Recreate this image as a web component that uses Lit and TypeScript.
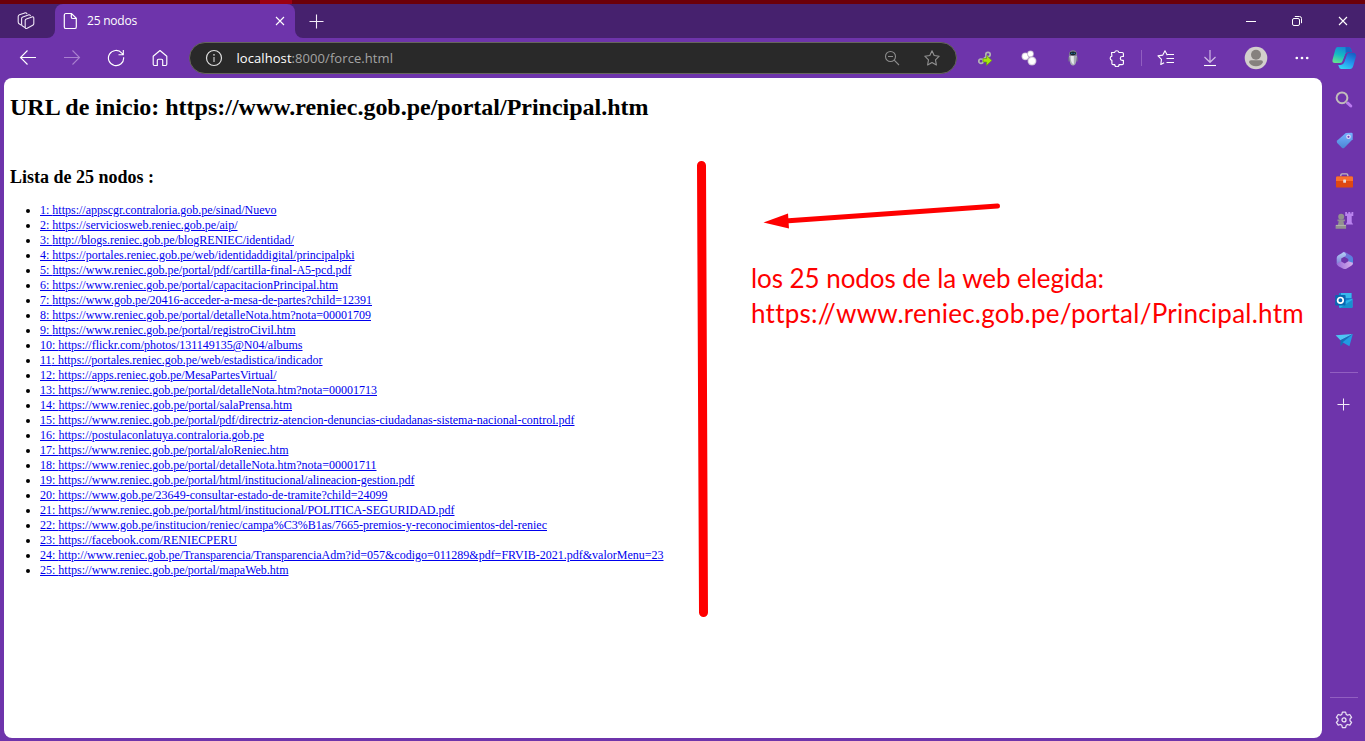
import { LitElement, html, css, svg } from "lit";
import { customElement } from "lit/decorators.js";

type Node = [label: string, width: number];

const NODES: Node[] = [
  ["https://appscgr.contraloria.gob.pe/sinad/Nuevo", 236.5],
  ["https://serviciosweb.reniec.gob.pe/aip/", 197.5],
  ["http://blogs.reniec.gob.pe/blogRENIEC/identidad/", 254],
  ["https://portales.reniec.gob.pe/web/identidaddigital/principalpki", 314.5],
  ["https://www.reniec.gob.pe/portal/pdf/cartilla-final-A5-pcd.pdf", 311.5],
  ["https://www.reniec.gob.pe/portal/capacitacionPrincipal.htm", 298],
  ["https://www.gob.pe/20416-acceder-a-mesa-de-partes?child=12391", 332],
  ["https://www.reniec.gob.pe/portal/detalleNota.htm?nota=00001709", 331],
  ["https://www.reniec.gob.pe/portal/registroCivil.htm", 255.5],
  ["https://flickr.com/photos/131149135@N04/albums", 262.5],
  ["https://portales.reniec.gob.pe/web/estadistica/indicador", 282.5],
  ["https://apps.reniec.gob.pe/MesaPartesVirtual/", 236.5],
  ["https://www.reniec.gob.pe/portal/detalleNota.htm?nota=00001713", 337],
  ["https://www.reniec.gob.pe/portal/salaPrensa.htm", 252],
  ["https://www.reniec.gob.pe/portal/pdf/directriz-atencion-denuncias-ciudadanas-sistema-nacional-control.pdf", 534.5],
  ["https://postulaconlatuya.contraloria.gob.pe", 224],
  ["https://www.reniec.gob.pe/portal/aloReniec.htm", 248.5],
  ["https://www.reniec.gob.pe/portal/detalleNota.htm?nota=00001711", 336.5],
  ["https://www.reniec.gob.pe/portal/html/institucional/alineacion-gestion.pdf", 374.5],
  ["https://www.gob.pe/23649-consultar-estado-de-tramite?child=24099", 347.5],
  ["https://www.reniec.gob.pe/portal/html/institucional/POLITICA-SEGURIDAD.pdf", 414.5],
  ["https://www.gob.pe/institucion/reniec/campa%C3%B1as/7665-premios-y-reconocimientos-del-reniec", 507],
  ["https://facebook.com/RENIECPERU", 197],
  ["http://www.reniec.gob.pe/Transparencia/TransparenciaAdm?id=057&codigo=011289&pdf=FRVIB-2021.pdf&valorMenu=23", 623.5],
  ["https://www.reniec.gob.pe/portal/mapaWeb.htm", 248.5],
];

const glyph = (size: number, body: unknown) =>
  html`<svg width=${size} height=${size} viewBox="0 0 ${size} ${size}">${body}</svg>`;

const ICONS = {
  workspaces: glyph(20, svg`<g fill="none" stroke="#eee6f5" stroke-width="1.1" stroke-linejoin="round">
    <path d="M9.2 9.6Q9.2 8.3 10.4 7.9L16 5.9Q17.8 5.4 17.8 7.1V12.4Q17.8 13.7 16.7 14.3L11.2 17.3Q9.2 18.1 9.2 16.2Z"/>
    <path d="M9 16.4 7.2 15.6Q5.6 15 5.6 13.3V7.6Q5.6 6.3 6.8 5.9L12.4 3.9Q14.2 3.4 14.5 5.2"/>
    <path d="M5.6 14.2 3.8 13.3Q2.2 12.6 2.2 11V5.6Q2.2 4.3 3.4 3.8L8.8 1.9Q10.6 1.400 11 3.2"/></g>`),
  page: glyph(18, svg`<path d="M4.2 1.5h6.3l4.8 4.8v8.6q0 1.6-1.6 1.6H4.9q-1.6 0-1.6-1.6V3.1q0-1.6 1.6-1.6M10.3 1.7v3.2q0 1.6 1.6 1.6h3.2" fill="none" stroke="#fff" stroke-width="1.2"/>`),
  close: glyph(10, svg`<path d="M1 1l8 8M9 1l-8 8" stroke="#fff" stroke-width="1.1"/>`),
  plus: glyph(16, svg`<path d="M8.5 1.5v14M1.5 8.5h14" stroke="#f4edf9" stroke-width="1.1"/>`),
  plusSmall: glyph(16, svg`<path d="M7.500 1.500v12M1.500 7.500h12" stroke="#f4edf9" stroke-width="1"/>`),
  min: glyph(12, svg`<path d="M1 6.5h10" stroke="#fff"/>`),
  restore: glyph(12, svg`<rect x="1.5" y="3.5" width="7" height="7" rx="1.5" fill="none" stroke="#fff"/><path d="M3.8 1.5h4.7q2 0 2 2v4.7" fill="none" stroke="#fff"/>`),
  back: glyph(18, svg`<path d="M17 8.500H1.500M8.500 1.500 1.500 8.500l7 7" fill="none" stroke="#fff" stroke-width="1.1"/>`),
  forward: glyph(18, svg`<path d="M1 8.500h15.500M9.500 1.500l7 7-7 7" fill="none" stroke="#a980cf" stroke-width="1.1"/>`),
  reload: glyph(18, svg`<path d="M16.6 8.3A7.6 7.6 0 1 1 14.8 4.1L16.3 5.6M16.3 1v4.7h-4.8" fill="none" stroke="#fff" stroke-width="1.15"/>`),
  home: glyph(18, svg`<path d="M2.2 7.3 9 1.5l6.8 5.8v8q0 1.2-1.2 1.2h-2.900v-5.100q0-1.200-1.200-1.200H7.500q-1.200 0-1.200 1.200v5.100H3.400q-1.200 0-1.200-1.200z" fill="none" stroke="#fff" stroke-width="1.15" stroke-linejoin="round"/>`),
  info: glyph(18, svg`<circle cx="9" cy="9" r="7.5" fill="none" stroke="#dedede" stroke-width="1.2"/><path d="M9 8v5" stroke="#bbb" stroke-width="1.3"/><circle cx="9" cy="5.8" r=".9" fill="#ccc"/>`),
  zoomOut: glyph(16, svg`<g fill="none" stroke="#8c8c8c" stroke-width="1.1"><circle cx="6.5" cy="6.5" r="5"/><path d="M4 6.5h5M10.2 10.2l4.8 4.8"/></g>`),
  star: glyph(18, svg`<path d="M9 1.8l2.2 4.7 5 .7-3.7 3.6.9 5.2L9 13.5 4.6 16l.9-5.2-3.7-3.6 5-.7z" fill="none" stroke="#929292" stroke-width="1.1" stroke-linejoin="round"/>`),
  chain: glyph(16, svg`<g fill="none" stroke="#b2b3b4" stroke-width="1.700"><circle cx="4" cy="11.200" r="2.200"/><path d="M5.500 9.800 10 5.800"/><circle cx="11" cy="4.500" r="2.200"/></g><path d="M6 8.600h3.600V5.400l5.200 5-5.200 5v-3.400H6z" fill="#a5e80c" stroke="#6a9c10" stroke-width=".7"/>`),
  dots: html`<svg width="18" height="18" viewBox="0 0 18 18"><defs><radialGradient id="ball"><stop offset=".6" stop-color="#fff"/><stop offset="1" stop-color="#bba9cb"/></radialGradient></defs><g fill="url(#ball)"><circle cx="5.4" cy="7.3" r="3.900"/><circle cx="10.500" cy="4.900" r="3.300"/><circle cx="12" cy="12" r="4.500"/></g></svg>`,
  robot: glyph(18, svg`<path d="M4.800 6.600h8.400l-.8 5.400Q11.500 16.500 9 16.500T5.600 12z" fill="#a8adb3"/><path d="M6.600 7h3.200v8.400q-2.500-1-3-5z" fill="#e6e8ec"/><path d="M4.900 5.700Q5.200 1.200 9 1.200t4.100 4.500q-1.200 1.200-4.100 1.200T4.900 5.700" fill="#7c8289"/><ellipse cx="9" cy="4.300" rx="3.100" ry="1.900" fill="#17202b"/><path d="M7 4.300h1.500M9.600 4.300h1.500" stroke="#237bb0"/><path d="M4.700 8v4.500M13.300 8v4.500" stroke="#727981" stroke-width=".8"/>`),
  puzzle: glyph(18, svg`<path d="M3.5 3.5h3.1a2.2 2.2 0 0 1 4.3 0h3.3q1.2 0 1.2 1.2v2.8h-1.2a1.9 1.9 0 0 0 0 3.8h1.2v3.1q0 1.2-1.2 1.2h-3.1a2.2 2.2 0 0 1-4.4 0H5.100q-1.200 0-1.200-1.200v-3a2.200 2.200 0 0 1 0-4.300z" fill="none" stroke="#fff" stroke-width="1.15" stroke-linejoin="round"/>`),
  favorites: glyph(18, svg`<path d="M10.3 6.2 8 1.8 5.8 6.1 1 6.9l3.5 3.4-.7 5.2 3.3-1.8M10 5.500H17M9.500 9.500H17M9.500 13.500H17" fill="none" stroke="#fff" stroke-width="1.1" stroke-linejoin="round"/>`),
  download: glyph(18, svg`<path d="M9 1v12M3.5 8l5.5 5.3L14.5 8" fill="none" stroke="#cfb8e4" stroke-width="1.2"/><path d="M3 16.5h12" stroke="#fff" stroke-width="1.1"/>`),
  avatar: glyph(24, svg`<circle cx="12" cy="12" r="11.3" fill="#d2cfcc"/><circle cx="12" cy="8.8" r="5" fill="#85817e"/><path d="M5 16.300q0-2 2-2h10q2 0 2 2-2 4-7 4t-7-4" fill="#85817e"/>`),
  more: glyph(16, svg`<g fill="#fff"><circle cx="2.8" cy="8" r="1.35"/><circle cx="8" cy="8" r="1.35"/><circle cx="13.2" cy="8" r="1.35"/></g>`),
  copilot: html`<svg width="26" height="26" viewBox="0 0 26 26"><defs>
    <linearGradient id="cpA" x1=".6" y1="0" x2=".2" y2="1"><stop stop-color="#1685d5"/><stop offset=".5" stop-color="#14b9c4"/><stop offset="1" stop-color="#65e58e"/></linearGradient>
    <linearGradient id="cpB" x1=".7" y1="0" x2=".2" y2="1"><stop stop-color="#1761c6"/><stop offset=".5" stop-color="#2495ee"/><stop offset="1" stop-color="#35d8f4"/></linearGradient></defs>
    <path d="M6.500 2h11q2 0 2.800 2.700l.7 2.300h-4q-2 0-2.600 2l-2.400 7q-.6 2-3.200 2H4Q.8 18 1.600 14.500L4.200 5Q4.800 2 6.500 2z" fill="url(#cpA)"/>
    <path d="M18 7.700h4.700q3 .8 2.200 4.100l-2.600 9q-1 3.200-3.300 3.200h-8.500q-2.200 0-2.700-2.500L7.200 20h2.600q2.600 0 3.400-2.700l2.600-7.600q.6-2 2.200-2z" fill="url(#cpB)"/>
    <path d="M14.500 2h3q2 0 2.800 2.700l.7 2.300h-4q-1.700 0-2.300 1.400z" fill="#1765c7"/>
    <path d="M14.300 9.500 16.600 7.700 12.800 17.600 10.800 18z" fill="#6e34ab"/></svg>`,
  search: glyph(20, svg`<circle cx="8" cy="7.8" r="5.4" fill="none" stroke="#c2bdbb" stroke-width="2"/><path d="M11.800 11.800l2 2" stroke="#a9a2ad" stroke-width="2"/><path d="M13.800 13.200l3 2.800" stroke="#bb7bf0" stroke-width="3" stroke-linecap="round"/>`),
  tag: html`<svg width="20" height="20" viewBox="0 0 20 20"><defs><linearGradient id="tagG" x2="0" y2="1"><stop stop-color="#76b2ff"/><stop offset="1" stop-color="#4a86d4"/></linearGradient></defs><path d="M11.800 3l5.500-.3q1.400 0 1.400 1.300v5.300l-8.300 8.500q-1.300 1-2.500 0l-4.700-4.800q-1-1.200 0-2.400z" fill="url(#tagG)"/><circle cx="14.500" cy="6.800" r="2.300" fill="#e3dafa"/><circle cx="14.500" cy="6.800" r="1.100" fill="#7642b5"/></svg>`,
  toolbox: glyph(20, svg`<path d="M6.800 6.600V5.200q0-1.300 1.300-1.300h4.400q1.300 0 1.300 1.300v1.400" fill="none" stroke="#bfb6bc" stroke-width="1.4"/><rect x="2" y="6.400" width="17" height="11.200" rx="1.2" fill="#df4812"/><path d="M2 7.600q0-1.200 1.200-1.200h14.600q1.200 0 1.200 1.200v3.400H2z" fill="#fa702e"/><rect x="9.200" y="9.600" width="2.800" height="3.200" rx=".5" fill="#e9dddb"/>`),
  games: glyph(20, svg`<g fill="#b983ee"><path d="M11.2 2h1.8v1.4h1.300V2h2v1.400h1.200V2h1.800v4h-1.600v6.200l1.500 2.200h-7.600l1.400-2.200V6h-1.800z"/></g><g fill="#92918f"><circle cx="7.200" cy="6.800" r="3"/><path d="M3.500 9.500h7.400v1.700H9.500l.7 3.900h1.900v3.700H1.600v-3.700h2.200l1-3.900H3.500z"/></g><path d="M2 15.400h10" stroke="#b5b4b0"/>`),
  m365: html`<svg width="20" height="20" viewBox="0 0 20 20"><defs>
    <linearGradient id="msA" x2="1" y2="1"><stop stop-color="#8d63d8"/><stop offset="1" stop-color="#3f8fe0"/></linearGradient>
    <linearGradient id="msB" x2="0" y2="1"><stop stop-color="#b4d3f6"/><stop offset="1" stop-color="#7f7ad8"/></linearGradient>
    <linearGradient id="msC"><stop stop-color="#9a6ddb"/><stop offset="1" stop-color="#d7aeea"/></linearGradient></defs>
    <path d="M8.500 2.300q1.500-.9 3 0l5.800 3.500q1.700 1 1.700 3v6l-4.700-3V9L8 5.500z" fill="url(#msA)"/>
    <path d="M10 1.900 4.300 5.200Q2.700 6.200 2.700 8v6.300L7.200 12V8.600l4-2.400q1-.8.8-2.300z" fill="url(#msB)"/>
    <path d="M7.200 11.600 2.700 13.800q.3 1.500 1.800 2.400l4.800 2.500q1.500.7 3 0l5-2.900Q19 14.700 19 12.800l-4.700-1.600-3.500 2.300z" fill="url(#msC)"/></svg>`,
  outlook: glyph(20, svg`<path d="M5 3h12.500v14H5z" fill="#1681cd"/><path d="M7 3h10.500v5H7z" fill="#38b8ed"/><path d="M5 13l13.500-4.500v8.300q0 1.200-1.200 1.200H6.200Q5 18 5 16.800z" fill="#29b1eb"/><path d="M6 18l12.400-8.200V17q0 1-1 1z" fill="#178fce"/><rect x="1.200" y="5" width="10.400" height="10.600" rx="1" fill="#0867b2"/><circle cx="6.400" cy="10.300" r="2.800" fill="none" stroke="#fff" stroke-width="1.7"/>`),
  send: glyph(20, svg`<path d="M1.600 5.200 18.800 4 6.500 10.200z" fill="#4cc6f4"/><path d="M18.800 4 6.500 10.200v6.200l3-3.600z" fill="#1371b9"/><path d="M18.800 4l-3.400 12.200-6.800-4z" fill="#229be3"/>`),
  gear: glyph(20, svg`<path d="M8.400 2.200h3.200l.6 2.200 1.400.8 2.200-.7 1.800 2.800-1.600 1.700v1.700l1.600 1.700-1.800 2.800-2.200-.7-1.400.8-.6 2.400H8.400l-.6-2.400-1.400-.8-2.200.7-1.800-2.800L4 10.700V9L2.400 7.300l1.800-2.800 2.200.7 1.400-.8z" fill="none" stroke="#e9dff3" stroke-width="1.25" stroke-linejoin="round"/><circle cx="10" cy="9.900" r="2" fill="none" stroke="#f1eaf7" stroke-width="1.2"/>`),
};

@customElement("app-root")
export class AppRoot extends LitElement {
  static styles = css`
    :host { display: block; font-family: "Open Sans", sans-serif; }
    * { box-sizing: border-box; }
    svg { display: block; flex: none; }
    .window { position: relative; display: flex; flex-direction: column; height: 741px; background: #6e34ab; overflow: hidden; }
    .strip { height: 4px; flex: none; background: linear-gradient(90deg, #6c000a 0 260px, #9b0013 260px 292px, #6c000a 292px); }
    .tabs { height: 34px; flex: none; display: flex; background: #6e34ab; }
    .work { width: 55px; background: #46216e; border-bottom-right-radius: 8px; padding: 7px 0 0 16px; }
    .corner { width: 240px; background: #46216e; }
    .tab { height: 34px; display: flex; align-items: center; padding: 0 10px 0 6px; background: #6e34ab; border-radius: 8px 8px 0 0; color: #fff; font-size: 12px; }
    .tab-title { flex: 1; margin-left: 8px; padding-bottom: 1px; }
    .rest { flex: 1; display: flex; background: #46216e; border-bottom-left-radius: 8px; padding-left: 13px; align-items: center; }
    .controls { margin-left: auto; margin-right: -1px; display: flex; }
    .control { width: 46px; height: 34px; display: flex; align-items: center; justify-content: center; }
    .toolbar { height: 40px; flex: none; display: flex; align-items: center; padding-left: 6px; }
    .btn { width: 44px; display: flex; justify-content: center; }
    .w42 { width: 42px; }
    .w46 { width: 46px; }
    .w50 { width: 50px; }
    .sep { width: 1px; height: 16px; margin: 0 1px 0 2px; background: #915fc0; }
    .address { width: 768px; height: 32px; margin: 0 6.500px 0 6.500px; display: flex; align-items: center; padding: 0 15px; border: 1px solid #66655d; border-radius: 16px; background: #292929; color: #a4a4a4; font-size: 13px; }
    .url { flex: 1; margin-left: 14px; white-space: nowrap; }
    .host { color: #fff; }
    .star { margin-left: 23px; }
    .main { flex: 1; display: flex; min-height: 0; }
    .page { width: 1318px; height: 660px; margin-left: 4px; padding: 15px 6px 0; border-radius: 8px; background: #fff; color: #000; font-family: "Liberation Serif", serif; font-size: 12px; }
    h1 { margin: 0; font-size: 24px; line-height: 28px; }
    h2 { margin: 46px 0 0; font-size: 18px; line-height: 20px; }
    ul { margin: 16px 0 0; padding-left: 30px; }
    li { height: 15px; line-height: 15px; }
    a { color: #0000ee; text-decoration: underline; white-space: nowrap; }
    .side { width: 43px; display: flex; flex-direction: column; align-items: center; padding: 2px 0 1px 1px; }
    .side-btn { width: 40px; height: 40px; display: flex; align-items: center; justify-content: center; }
    .rule { width: 28px; height: 1px; background: #925fc1; margin: 12px 0; }
    .rule-end { margin: auto 0 2px; }
    .marks { position: absolute; left: 0; top: 0; pointer-events: none; }
    .note { position: absolute; left: 751px; top: 261px; color: #fe0000; font-family: Lato, "Open Sans", sans-serif; font-size: 26px; line-height: 35px; white-space: nowrap; }
    .line { display: block; width: max-content; }
  `;

  // Spreads each marked text over its intended width by adjusting the tracking.
  private async fit() {
    await document.fonts.ready;
    this.renderRoot.querySelectorAll<HTMLElement>("[data-w]").forEach((el) => {
      el.style.letterSpacing = "0px";
      const gap = Number(el.dataset.w) - el.getBoundingClientRect().width;
      el.style.letterSpacing = `${gap / el.textContent!.length}px`;
    });
  }

  firstUpdated() {
    this.fit();
  }

  render() {
    const btn = (icon: unknown, size = "") => html`<div class="btn ${size}">${icon}</div>`;
    const side = (icon: unknown) => html`<div class="side-btn">${icon}</div>`;
    return html`
      <div class="window">
        <div class="strip"></div>
        <div class="tabs">
          <div class="work">${ICONS.workspaces}</div>
          <div class="corner">
            <div class="tab">${ICONS.page}<span class="tab-title"><span data-w="50">25 nodos</span></span>${ICONS.close}</div>
          </div>
          <div class="rest">
            ${ICONS.plus}
            <div class="controls">
              <div class="control">${ICONS.min}</div>
              <div class="control">${ICONS.restore}</div>
              <div class="control">${ICONS.close}</div>
            </div>
          </div>
        </div>
        <div class="toolbar">
          ${btn(ICONS.back)}${btn(ICONS.forward)}${btn(ICONS.reload)}${btn(ICONS.home)}
          <div class="address">
            ${ICONS.info}
            <span class="url"><span data-w="156.5"><span class="host">localhost</span>:8000/force.html</span></span>
            ${ICONS.zoomOut}<span class="star">${ICONS.star}</span>
          </div>
          ${btn(ICONS.chain)}${btn(ICONS.dots)}${btn(ICONS.robot)}${btn(ICONS.puzzle)}
          <div class="sep"></div>
          ${btn(ICONS.favorites, "w46")}${btn(ICONS.download, "w42")}${btn(ICONS.avatar, "w50")}${btn(ICONS.more, "w42")}${btn(ICONS.copilot, "w42")}
        </div>
        <div class="main">
          <div class="page">
            <h1><span data-w="638.6">URL de inicio: https://www.reniec.gob.pe/portal/Principal.htm</span></h1>
            <h2><span data-w="144">Lista de 25 nodos :</span></h2>
            <ul>
              ${NODES.map(([label, width], i) => html`<li><a data-w=${width}>${i + 1}: ${label}</a></li>`)}
            </ul>
          </div>
          <div class="side">
            ${[ICONS.search, ICONS.tag, ICONS.toolbox, ICONS.games, ICONS.m365, ICONS.outlook, ICONS.send].map(side)}
            <div class="rule"></div>
            ${side(ICONS.plusSmall)}
            <div class="rule rule-end"></div>
            ${side(ICONS.gear)}
          </div>
        </div>
        <svg class="marks" width="1365" height="741" viewBox="0 0 1365 741">
          <path d="M701.5 165.5 703.5 612.5" stroke="#fe0000" stroke-width="9" stroke-linecap="round" />
          <path d="M785 221 997.5 206" stroke="#fe0000" stroke-width="5" stroke-linecap="round" />
          <path d="M763.5 222.5 788 213.500 789 228.500z" fill="#fe0000" />
        </svg>
        <div class="note">
          <span class="line" data-w="353">los 25 nodos de la web elegida:</span>
          <span class="line" data-w="552">https://www.reniec.gob.pe/portal/Principal.htm</span>
        </div>
      </div>
    `;
  }
}
